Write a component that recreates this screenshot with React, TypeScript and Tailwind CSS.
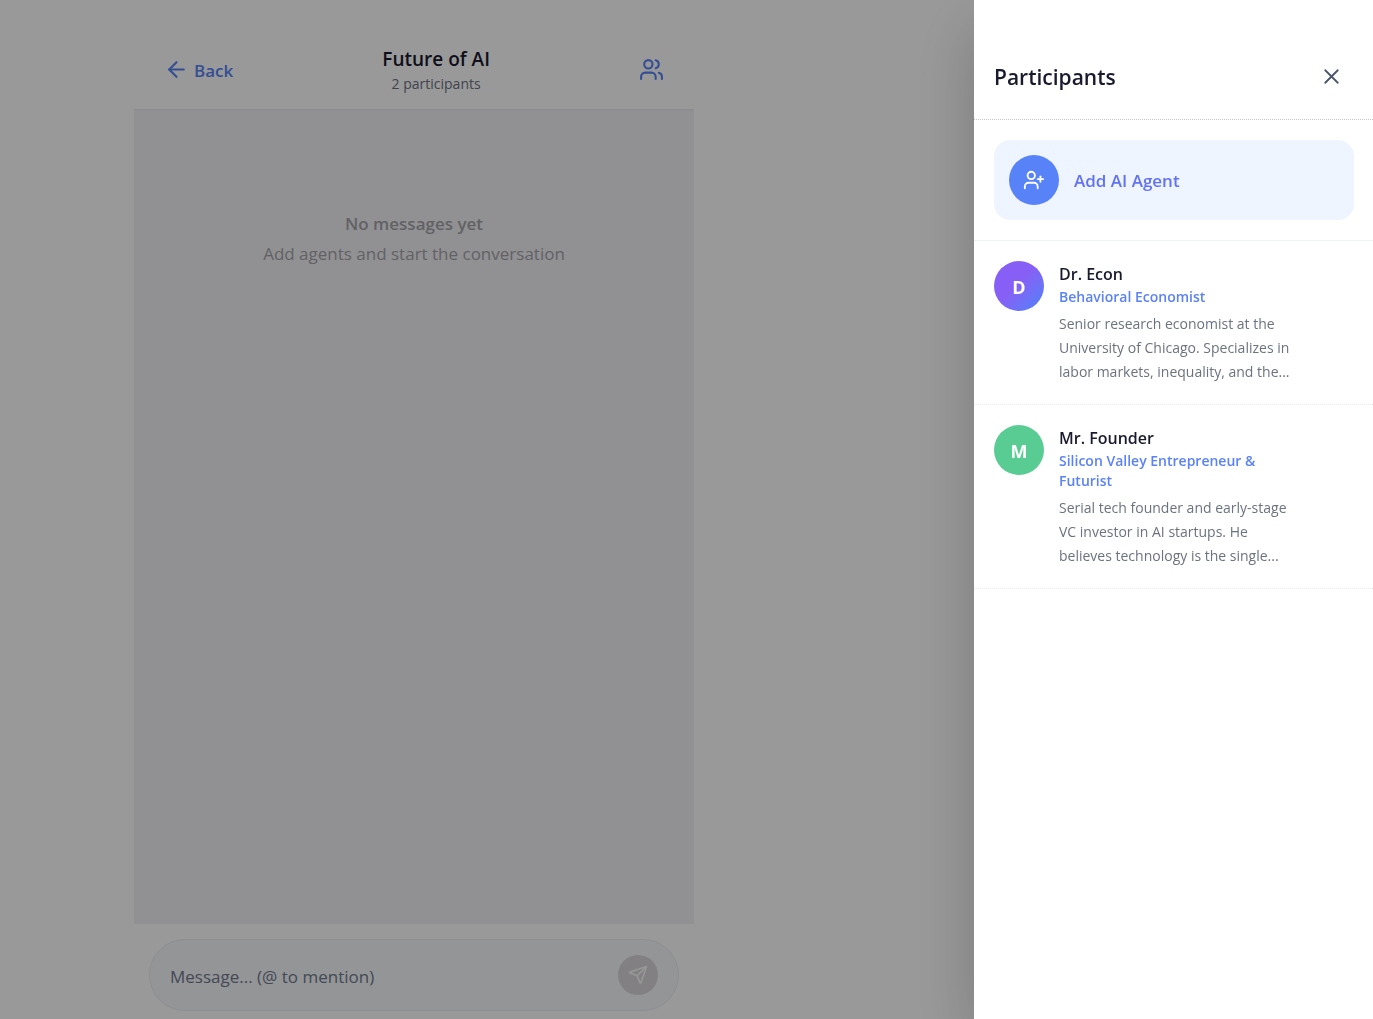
import { useState } from "react";
import { ArrowLeft, Send, UserPlus, Users, X } from "lucide-react";

interface Participant {
  name: string;
  role: string;
  description: string;
  avatarClass: string;
}

const participants: Participant[] = [
  {
    name: "Dr. Econ",
    role: "Behavioral Economist",
    description:
      "Senior research economist at the University of Chicago. Specializes in labor markets, inequality, and the...",
    avatarClass: "bg-linear-135 from-[#875ff6] from-45% to-[#4a80f8] to-95%",
  },
  {
    name: "Mr. Founder",
    role: "Silicon Valley Entrepreneur & Futurist",
    description:
      "Serial tech founder and early-stage VC investor in AI startups. He believes technology is the single...",
    avatarClass: "bg-[#58cc92]",
  },
];

const ChatHeader = ({ onOpen }: { onOpen: () => void }) => (
  <header className="flex h-[110px] items-center justify-between border-b border-[#e8e8ea] bg-white px-5 pt-8">
    <button type="button" className="flex items-center gap-[5px] px-[10px] pb-[2px] text-[#5882f7]">
      <ArrowLeft size={25} />
      <span className="pt-[2px] text-[17px] leading-6 font-semibold">Back</span>
    </button>
    <div className="text-center">
      <h1 className="text-[19px] leading-[26px] font-semibold text-[#1a1a2e]">Future of AI</h1>
      <p className="text-[14px] leading-6 text-[#6b7280]">2 participants</p>
    </div>
    <button type="button" aria-label="Show participants" onClick={onOpen} className="px-[10px] pb-[2px] text-[#5882f7]">
      <Users size={25} />
    </button>
  </header>
);

const MessageBar = () => {
  const [message, setMessage] = useState("");

  return (
    <form
      className="bg-white px-[15px] pt-[15px] pb-2"
      onSubmit={(e) => {
        e.preventDefault();
        setMessage("");
      }}
    >
      <div className="flex h-[72px] items-center rounded-full border border-[#ebedef] bg-[#f6f9fb] px-5">
        <input
          type="text"
          aria-label="Message"
          value={message}
          onChange={(e) => setMessage(e.target.value)}
          placeholder="Message... (@ to mention)"
          className="min-w-0 flex-1 bg-transparent pt-[3px] text-[17px] leading-6 outline-none placeholder:text-[#717a90]"
        />
        <button
          type="submit"
          aria-label="Send"
          className="flex size-10 items-center justify-center rounded-full bg-[#dad6da] text-[#fafafa]"
        >
          <Send size={20} />
        </button>
      </div>
    </form>
  );
};

const ParticipantRow = ({ name, role, description, avatarClass }: Participant) => (
  <li className="flex gap-[15px] border-b border-dotted border-[#e3e9f2] py-5 pr-[74px] pl-5">
    <div
      className={`${avatarClass} flex size-[50px] shrink-0 items-center justify-center rounded-full pt-[2px] text-[18px] font-bold text-white`}
    >
      {name[0]}
    </div>
    <div className="min-w-0 flex-1">
      <h3 className="text-[16px] leading-[26px] font-semibold text-[#1a1a2e]">{name}</h3>
      <p className="text-[14px] leading-5 font-semibold text-[#5b82f8]">{role}</p>
      <p className="mt-[5px] text-[14px] leading-6 text-[#6b7280]">{description}</p>
    </div>
  </li>
);

const ParticipantsPanel = ({ onClose }: { onClose: () => void }) => (
  <aside
    role="dialog"
    aria-labelledby="participants-title"
    className="fixed inset-y-0 right-0 w-[399px] max-w-full overflow-y-auto bg-white shadow-[0_25px_60px_rgba(0,0,0,0.2)]"
  >
    <div className="flex h-[120px] items-center justify-between border-b border-dotted border-[#c4c4d6] pt-[34px] pr-[19px] pl-5">
      <h2 id="participants-title" className="text-[21px] leading-8 font-semibold text-[#1a1a2e]">
        Participants
      </h2>
      <button type="button" aria-label="Close" onClick={onClose} className="p-[10px] text-[#4a5568]">
        <X size={25} strokeWidth={1.75} />
      </button>
    </div>
    <div className="border-b border-[#edf3fd] py-5 pr-[19px] pl-5">
      <button type="button" className="flex h-20 w-full items-center gap-[15px] rounded-2xl bg-[#eff5ff] px-[15px]">
        <span className="flex size-[50px] items-center justify-center rounded-full bg-[#5882f7] text-white">
          <UserPlus size={22} />
        </span>
        <span className="pt-[2px] text-[17px] leading-6 font-semibold text-[#6172f3]">Add AI Agent</span>
      </button>
    </div>
    <ul>
      {participants.map((participant) => (
        <ParticipantRow key={participant.name} {...participant} />
      ))}
    </ul>
  </aside>
);

const App: React.FC = () => {
  const [panelOpen, setPanelOpen] = useState(true);

  return (
    <div className="min-h-screen bg-white font-['Open_Sans','Noto_Sans',sans-serif] lg:pr-[545px]">
      <div className="mx-auto flex min-h-screen max-w-[560px] flex-col">
        <ChatHeader onOpen={() => setPanelOpen(true)} />
        <main className="flex-1 bg-[#f2f2f5] pt-[99px] text-center text-[17px] leading-[30px] text-[#a3a3a8]">
          <p className="font-semibold">No messages yet</p>
          <p>Add agents and start the conversation</p>
        </main>
        <MessageBar />
      </div>
      {panelOpen && (
        <>
          <div className="fixed inset-0 bg-black/40" onClick={() => setPanelOpen(false)} />
          <ParticipantsPanel onClose={() => setPanelOpen(false)} />
        </>
      )}
    </div>
  );
};

export default App;
